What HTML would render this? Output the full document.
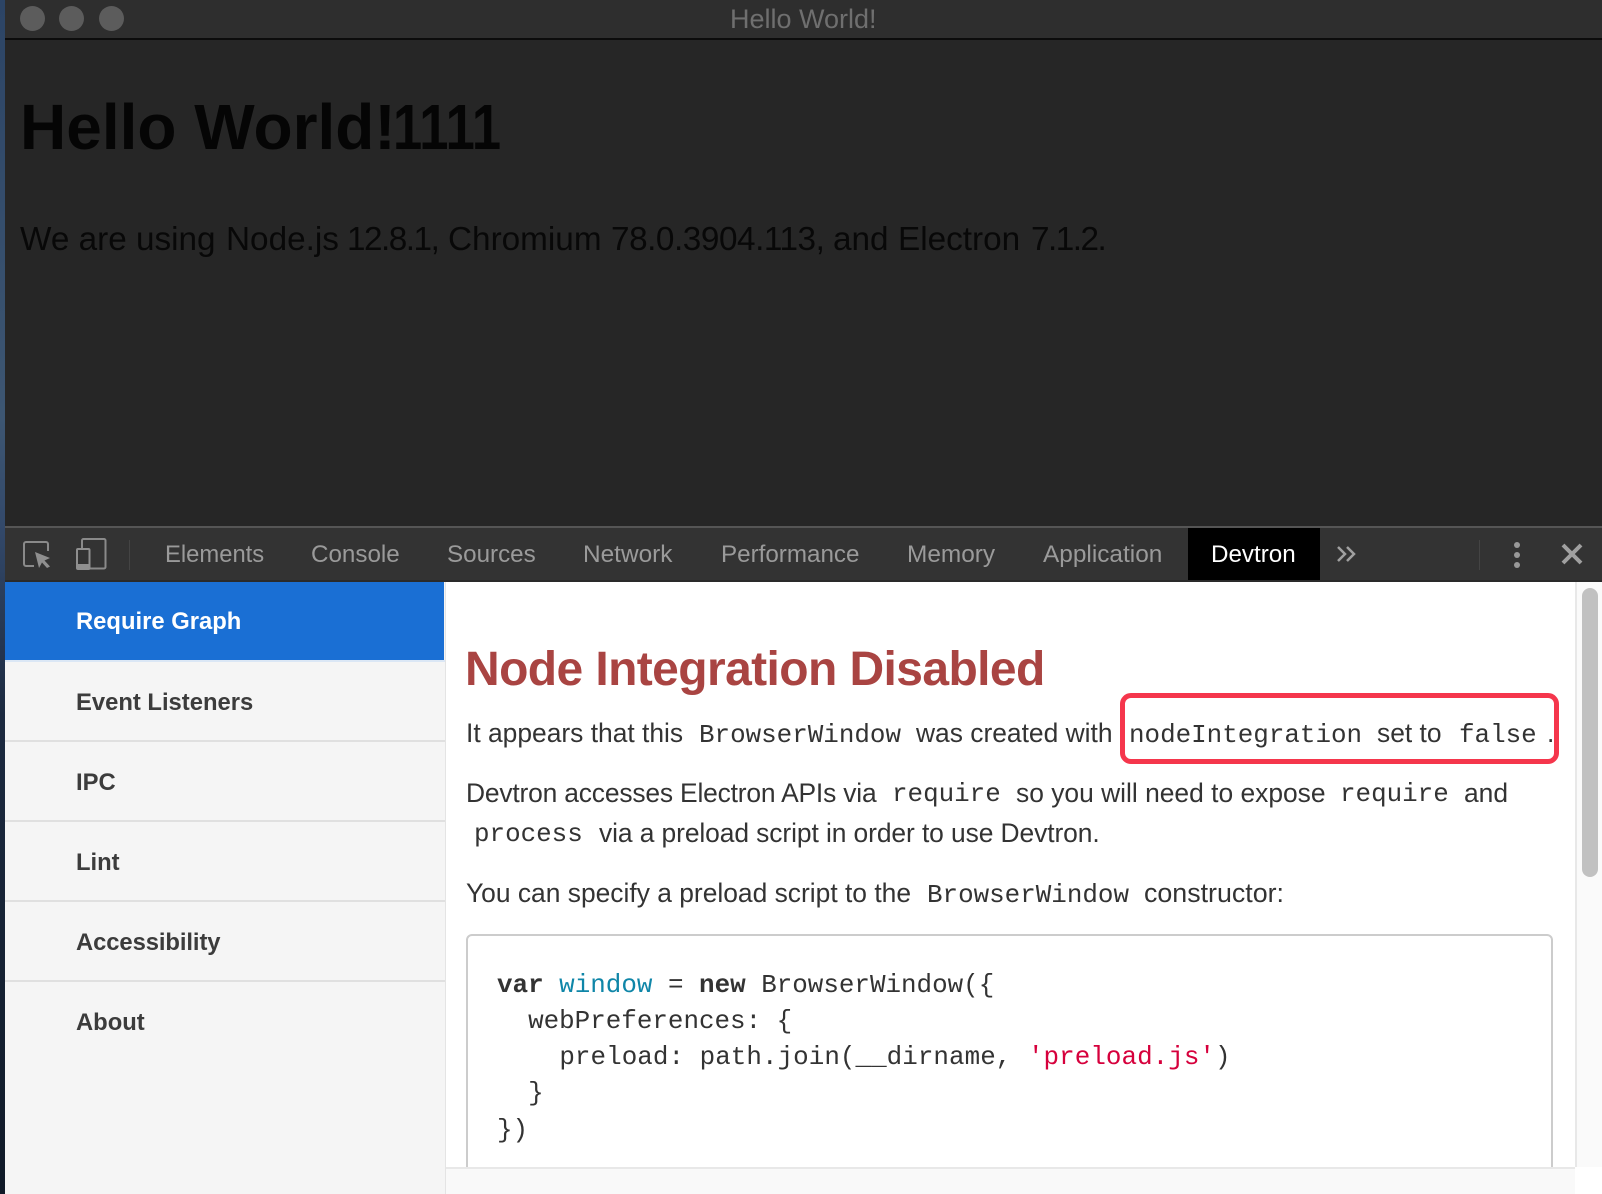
<!DOCTYPE html>
<html><head><meta charset="utf-8"><style>
html,body{margin:0;padding:0;width:1602px;height:1194px;overflow:hidden;background:#262626}
div,span.t{position:absolute}
.t{position:absolute;white-space:pre;line-height:1;font-family:"Liberation Sans",sans-serif}
.m{font-family:"Liberation Mono",monospace;font-size:25.9px;color:#333}
.b{font-size:26.4px;color:#333}
.tab{font-size:24.2px;color:#9a9a9a;top:543px}
.si{font-size:23.8px;font-weight:bold;color:#3c3c3c;left:76px}
.dv{left:5px;width:440px;height:2px;background:#e0e0e0}
.dot{width:25px;height:25px;border-radius:50%;background:#5c5c5c;top:6px}
.p{font-size:33.3px;color:#080808;top:223px}
</style></head><body>
<div style="left:0;top:0;width:5px;height:1194px;background:linear-gradient(#2c4465,#3d5672 35%,#33496a 44%,#1c2a40 60%,#101a28)"></div>
<div style="left:5px;top:0;width:1597px;height:39px;background:#2e2e2e"></div>
<div style="left:5px;top:38px;width:1597px;height:2px;background:#0c0c0c"></div>
<div class="dot" style="left:20px"></div><div class="dot" style="left:59px"></div><div class="dot" style="left:99px"></div>
<span class="t" style="left:730px;top:6px;font-size:27px;color:#6f6f6f">Hello World!</span>
<span class="t" style="left:20px;top:95px;font-size:64px;font-weight:bold;color:#050505">Hello World!<span style="display:inline-block;transform:scaleX(.82);transform-origin:0 50%;margin-left:-3px">1111</span></span>
<span class="t p" style="left:20px">We are using</span>
<span class="t p" style="left:226px">Node.js</span>
<span class="t p" style="left:347px;letter-spacing:-1.5px">12.8.1,</span>
<span class="t p" style="left:448px">Chromium</span>
<span class="t p" style="left:611px;letter-spacing:-.45px">78.0.3904.113,</span>
<span class="t p" style="left:833px">and</span>
<span class="t p" style="left:898px">Electron</span>
<span class="t p" style="left:1031px;letter-spacing:-1.5px">7.1.2.</span>

<div style="left:5px;top:526px;width:1597px;height:56px;background:#333"></div>
<div style="left:5px;top:526px;width:1597px;height:2px;background:#555"></div>
<div style="left:5px;top:580px;width:1597px;height:2px;background:#2a2a2a"></div>
<div style="left:1188px;top:528px;width:132px;height:52px;background:#000"></div>
<svg style="position:absolute;left:0;top:526px" width="1602" height="56" viewBox="0 526 1602 56">
<path d="M34 566H26a2 2 0 0 1-2-2V544a2 2 0 0 1 2-2H46a2 2 0 0 1 2 2V551" fill="none" stroke="#8a8a8a" stroke-width="2"/>
<path d="M35 552L50 558L44.500 560.500L50 566.500L47 568L42 562.500L39 568Z" fill="#8f8f8f"/>
<rect x="82" y="539" width="23.500" height="29.500" rx="1.500" fill="none" stroke="#8a8a8a" stroke-width="2"/>
<rect x="77" y="549" width="12.500" height="20" rx="1" fill="#333" stroke="#8f8f8f" stroke-width="2"/>
<rect x="77" y="564" width="12.500" height="5" fill="#8f8f8f"/>
<rect x="129" y="540" width="1" height="30" fill="#444"/>
<rect x="1479" y="540" width="1" height="30" fill="#444"/>
<path d="M1338 547L1345 554L1338 561M1347 547L1354 554L1347 561" fill="none" stroke="#a0a0a0" stroke-width="2.500"/>
<circle cx="1517" cy="545" r="3" fill="#999"/><circle cx="1517" cy="555" r="3" fill="#999"/><circle cx="1517" cy="565" r="3" fill="#999"/>
<path d="M1563 545L1581 563M1581 545L1563 563" stroke="#a0a0a0" stroke-width="4"/>
</svg>
<span class="t tab" style="left:165px;font-size:23.8px">Elements</span>
<span class="t tab" style="left:311px">Console</span>
<span class="t tab" style="left:447px">Sources</span>
<span class="t tab" style="left:583px;font-size:24.4px">Network</span>
<span class="t tab" style="left:721px">Performance</span>
<span class="t tab" style="left:907px;font-size:24.4px">Memory</span>
<span class="t tab" style="left:1043px;font-size:24.4px">Application</span>
<span class="t tab" style="left:1211px;color:#fff">Devtron</span>

<div style="left:5px;top:582px;width:440px;height:612px;background:#f5f5f5"></div>
<div style="left:445px;top:582px;width:1157px;height:612px;background:#fff"></div>
<div style="left:445px;top:582px;width:1px;height:612px;background:#e4e4e4"></div>
<div style="left:5px;top:582px;width:439px;height:78px;background:#1a6fd4"></div>
<div class="dv" style="top:660px;background:#dbe7f5"></div>
<div class="dv" style="top:740px"></div><div class="dv" style="top:820px"></div><div class="dv" style="top:900px"></div><div class="dv" style="top:980px"></div>
<span class="t si" style="top:610px;color:#fff">Require Graph</span>
<span class="t si" style="top:691px">Event Listeners</span>
<span class="t si" style="top:771px">IPC</span>
<span class="t si" style="top:851px">Lint</span>
<span class="t si" style="top:931px;letter-spacing:-.08px">Accessibility</span>
<span class="t si" style="top:1011px">About</span>

<span class="t" style="left:465px;top:646px;font-size:48px;font-weight:bold;color:#a94442;letter-spacing:-.6px">Node Integration Disabled</span>
<span class="t b" style="left:466px;top:720px">It appears that this</span>
<span class="t m" style="left:699px;top:723px">BrowserWindow</span>
<span class="t b" style="left:916px;top:720px">was created with</span>
<span class="t m" style="left:1129px;top:723px">nodeIntegration</span>
<span class="t b" style="left:1377px;top:720px">set to</span>
<span class="t m" style="left:1459px;top:723px">false</span>
<span class="t b" style="left:1547px;top:720px">.</span>
<div style="left:1120px;top:693px;width:429px;height:61px;border:5px solid #f5364c;border-radius:11px"></div>

<span class="t b" style="left:466px;top:780px;letter-spacing:-.18px">Devtron accesses Electron APIs via</span>
<span class="t m" style="left:892px;top:782px">require</span>
<span class="t b" style="left:1016px;top:780px">so you will need to expose</span>
<span class="t m" style="left:1340px;top:782px">require</span>
<span class="t b" style="left:1464px;top:780px">and</span>
<span class="t m" style="left:474px;top:822px">process</span>
<span class="t b" style="left:599px;top:820px;letter-spacing:-.09px">via a preload script in order to use Devtron.</span>
<span class="t b" style="left:466px;top:880px">You can specify a preload script to the</span>
<span class="t m" style="left:927px;top:883px">BrowserWindow</span>
<span class="t b" style="left:1144px;top:880px;font-size:26.8px">constructor:</span>

<div style="left:466px;top:934px;width:1083px;height:241px;border:2px solid #ccc;border-radius:6px;background:#fff"></div>
<span class="t m" style="left:497px;top:973px"><b>var</b> <span style="color:#0f86a8">window</span> = <b>new</b> BrowserWindow({</span>
<span class="t m" style="left:497px;top:1009px">  webPreferences: {</span>
<span class="t m" style="left:497px;top:1045px;letter-spacing:.05px">    preload: path.join(__dirname, <span style="color:#d6003c;margin-left:1px">'preload.js'</span>)</span>
<span class="t m" style="left:497px;top:1081px">  }</span>
<span class="t m" style="left:497px;top:1118px">})</span>

<div style="left:446px;top:1167px;width:1129px;height:27px;background:#f9f9f9;border-top:2px solid #e8e8e8;box-sizing:border-box"></div>
<div style="left:1575px;top:582px;width:27px;height:585px;background:#fafafa;border-left:2px solid #e8e8e8;box-sizing:border-box"></div>
<div style="left:1582px;top:588px;width:16px;height:289px;border-radius:8px;background:#c1c1c1"></div>
</body></html>
